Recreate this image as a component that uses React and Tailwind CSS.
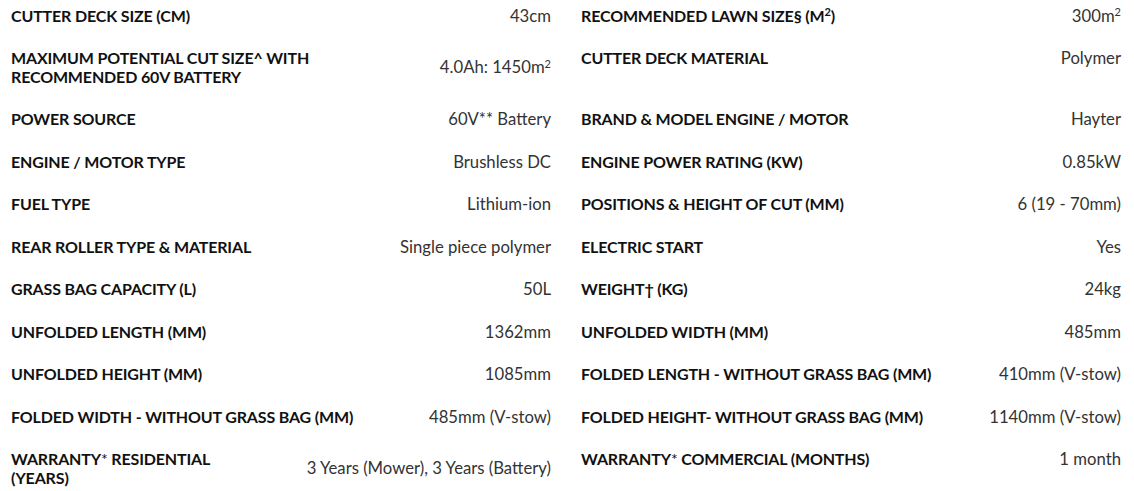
const M2 = () => (
  <>
    m<sup className="text-[11px]">2</sup>
  </>
);

const Star = () => <span className="font-normal">*</span>;

/* spec rows: [label, value] pairs, left column then right column */
const rows = [
  [
    ["CUTTER DECK SIZE (CM)", "43cm"],
    [<>RECOMMENDED LAWN SIZE§ (M<sup className="text-[11px]">2</sup>)</>, <>300<M2 /></>],
  ],
  [
    [<>MAXIMUM POTENTIAL CUT SIZE^ WITH<br />RECOMMENDED 60V BATTERY</>, <>4.0Ah: 1450<M2 /></>],
    ["CUTTER DECK MATERIAL", "Polymer"],
  ],
  [
    ["POWER SOURCE", "60V** Battery"],
    ["BRAND & MODEL ENGINE / MOTOR", "Hayter"],
  ],
  [
    ["ENGINE / MOTOR TYPE", "Brushless DC"],
    ["ENGINE POWER RATING (KW)", "0.85kW"],
  ],
  [
    ["FUEL TYPE", "Lithium-ion"],
    ["POSITIONS & HEIGHT OF CUT (MM)", "6 (19 - 70mm)"],
  ],
  [
    ["REAR ROLLER TYPE & MATERIAL", "Single piece polymer"],
    ["ELECTRIC START", "Yes"],
  ],
  [
    ["GRASS BAG CAPACITY (L)", "50L"],
    ["WEIGHT† (KG)", "24kg"],
  ],
  [
    ["UNFOLDED LENGTH (MM)", "1362mm"],
    ["UNFOLDED WIDTH (MM)", "485mm"],
  ],
  [
    ["UNFOLDED HEIGHT (MM)", "1085mm"],
    ["FOLDED LENGTH - WITHOUT GRASS BAG (MM)", "410mm (V-stow)"],
  ],
  [
    ["FOLDED WIDTH - WITHOUT GRASS BAG (MM)", "485mm (V-stow)"],
    ["FOLDED HEIGHT- WITHOUT GRASS BAG (MM)", "1140mm (V-stow)"],
  ],
  [
    [<>WARRANTY<Star /> RESIDENTIAL<br />(YEARS)</>, "3 Years (Mower), 3 Years (Battery)"],
    [<>WARRANTY<Star /> COMMERCIAL (MONTHS)</>, "1 month"],
  ],
];

function SpecItem({ label, value }) {
  return (
    <div className="flex items-center justify-between gap-6 pt-[6.5px] pb-[17.5px]">
      <div className="font-bold text-[16px] tracking-[-0.15px] text-[#111] uppercase">{label}</div>
      <div className="shrink-0 text-right text-[16.7px] text-[#333]">{value}</div>
    </div>
  );
}

export default function App() {
  return (
    <div
      className="bg-white w-[1134px] h-[491px] overflow-hidden pl-[11px] pr-[13px] leading-[18.5px]"
      style={{ fontFamily: "Lato, 'Open Sans', sans-serif" }}
    >
      <div className="grid grid-cols-2 gap-x-[30px] items-start">
        {rows.map(([left, right], i) => (
          <div key={i} className="contents">
            <SpecItem label={left[0]} value={left[1]} />
            <SpecItem label={right[0]} value={right[1]} />
          </div>
        ))}
      </div>
    </div>
  );
}
